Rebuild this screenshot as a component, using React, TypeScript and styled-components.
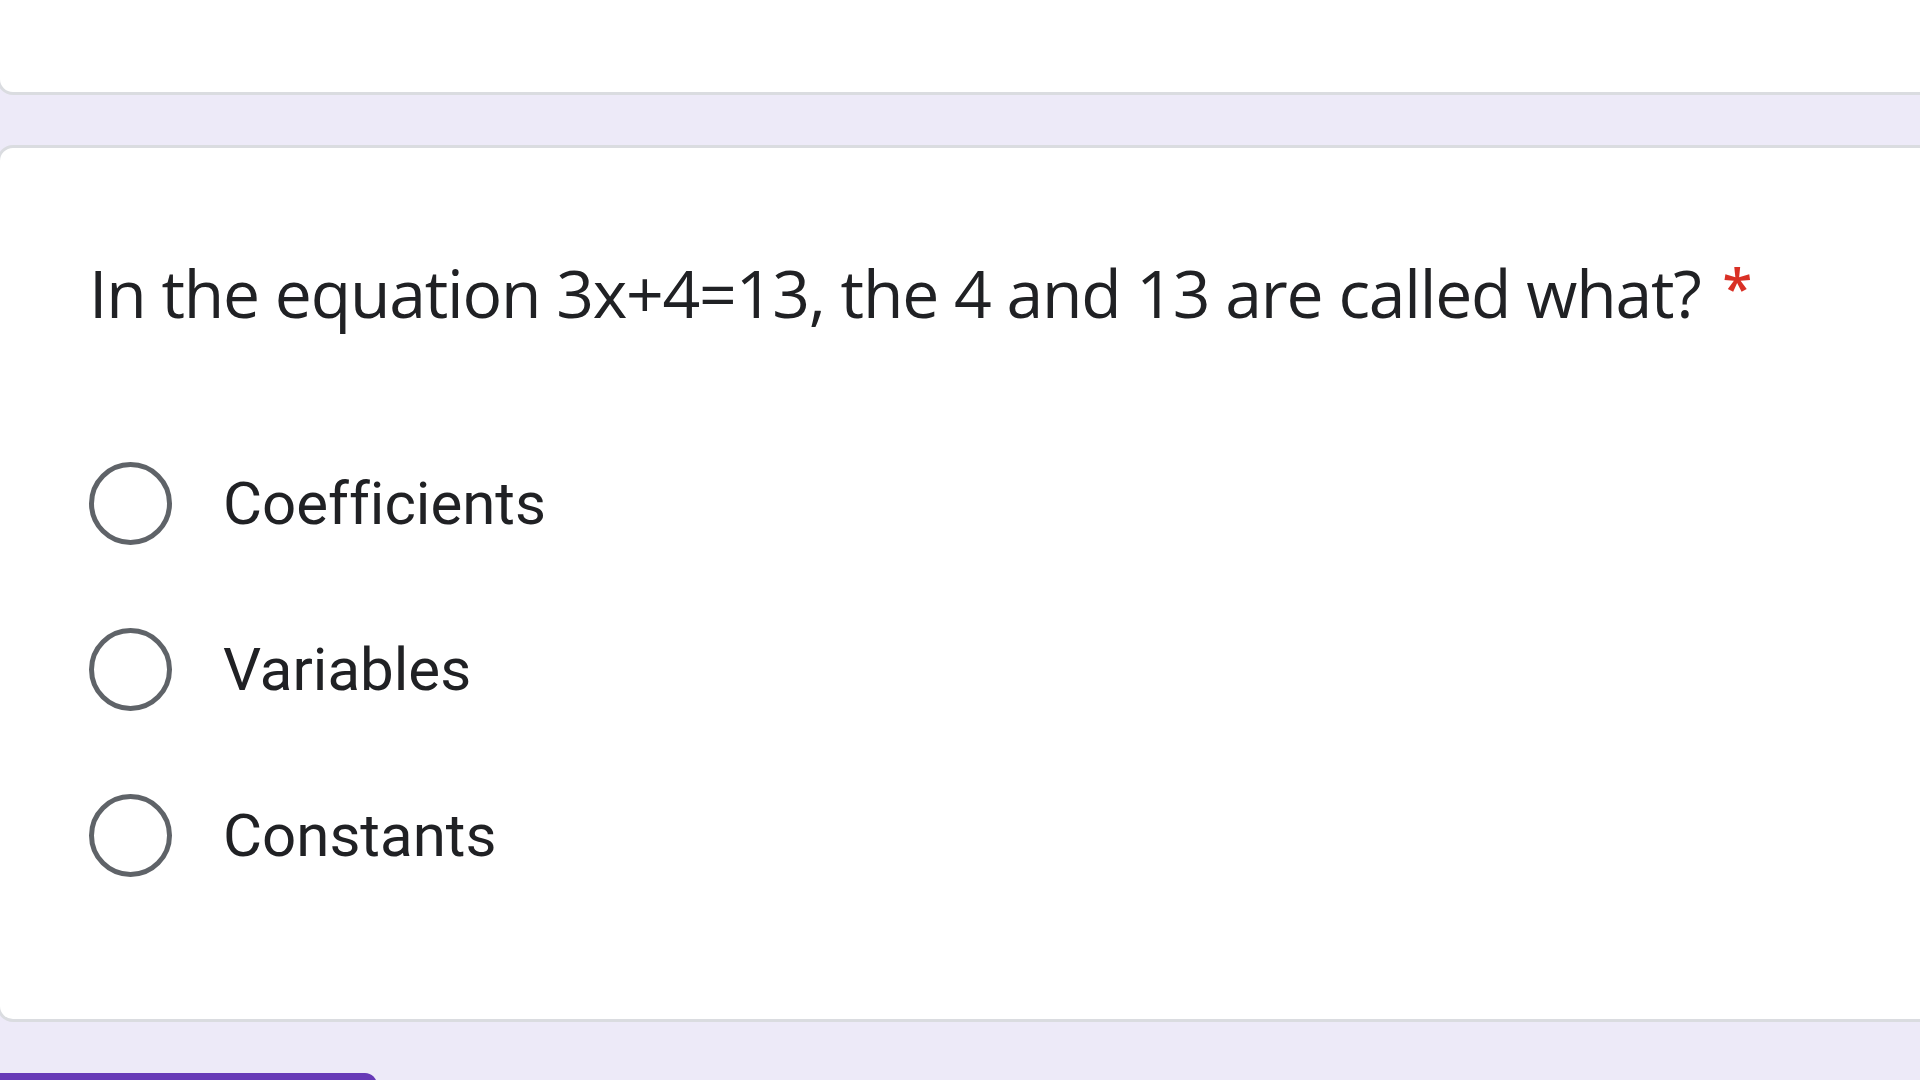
import React from "react";
import styled, { createGlobalStyle } from "styled-components";

const GlobalStyle = createGlobalStyle`
  html, body {
    margin: 0;
    padding: 0;
    background: #edeaf8;
    overflow: hidden;
  }
  body {
    font-family: Roboto, "Liberation Sans", sans-serif;
    color: #202124;
  }
`;

const Page = styled.div`
  width: 1920px;
  height: 1080px;
  overflow: hidden;
  display: flex;
  flex-direction: column;
`;

const Card = styled.div`
  margin-left: -3px;
  width: calc(100% + 40px);
  background: #fff;
  border: 3px solid #dadce0;
  border-radius: 16px;
  box-sizing: border-box;
`;

const HeaderCard = styled(Card)`
  height: 135px;
  margin-top: -40px;
  flex: none;
`;

const QuestionCard = styled(Card)`
  margin-top: 50px;
  padding: 104px 0 101px 89px;
  flex: none;
`;

const Question = styled.div`
  font-family: "Open Sans", sans-serif;
  font-size: 66px;
  height: 80px;
  line-height: 80px;
  letter-spacing: -1.2px;
  color: #202124;
  white-space: nowrap;
  margin-bottom: 88px;
`;

const Required = styled.span`
  color: #d93025;
  font-size: 54px;
  font-weight: 600;
  line-height: 0;
  margin-left: 22px;
  vertical-align: 10px;
`;

const Options = styled.div`
  display: flex;
  flex-direction: column;
`;

const Option = styled.label`
  display: flex;
  align-items: center;
  height: 166px;
  gap: 51px;
`;

const Radio = styled.span`
  width: 83px;
  height: 83px;
  box-sizing: border-box;
  border: 5.5px solid #5f6368;
  border-radius: 50%;
  flex: none;
`;

const OptionText = styled.span`
  font-family: Roboto, sans-serif;
  font-size: 60px;
  font-variant-ligatures: none;
  color: #202124;
`;

const SubmitButton = styled.div`
  margin-top: 51px;
  margin-left: -20px;
  width: 397px;
  height: 48px;
  background: #673ab7;
  border-radius: 12px;
  flex: none;
`;

const options = ["Coefficients", "Variables", "Constants"];

export default function App() {
  return (
    <Page>
      <GlobalStyle />
      <HeaderCard />
      <QuestionCard>
        <Question>
          In the equation 3x+4=13, the 4 and 13 are called what?
          <Required>*</Required>
        </Question>
        <Options>
          {options.map((o) => (
            <Option key={o}>
              <Radio />
              <OptionText>{o}</OptionText>
            </Option>
          ))}
        </Options>
      </QuestionCard>
      <SubmitButton />
    </Page>
  );
}
